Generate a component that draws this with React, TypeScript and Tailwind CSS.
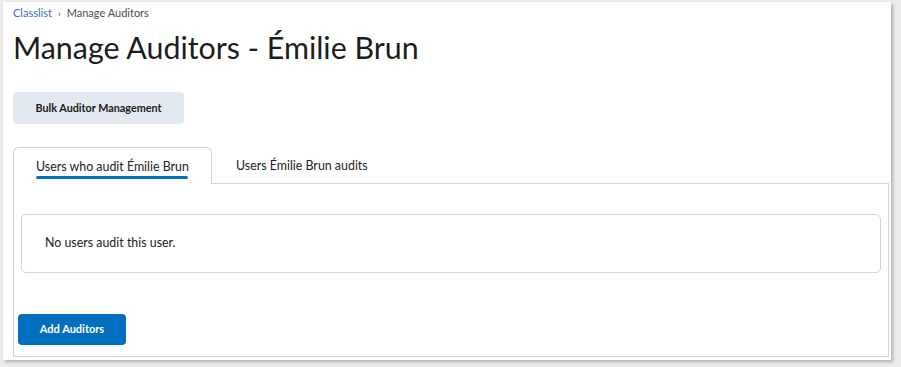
import React from 'react';

const App: React.FC = () => {
    return (
        <div className="w-[901px] h-[367px] bg-[#ececec] pt-[2px] pl-[3px] overflow-hidden" style={{ fontFamily: 'Lato, "Noto Sans", sans-serif' }}>
            <div className="w-[888px] h-[358px] bg-white shadow-[2px_2px_3px_rgba(0,0,0,0.25)] pl-[10px] pr-[2px] text-[#202122]">
                <nav className="flex items-center h-[21px] text-[11px] leading-none">
                    <span className="text-[#3a6db3]">Classlist</span>
                    <span className="mx-[6px] text-[#494c4e] text-[10px]">›</span>
                    <span className="text-[#494c4e]">Manage Auditors</span>
                </nav>
                <h1 className="mt-[6px] text-[30.4px] leading-[36px] text-[#1b1d1e]">Manage Auditors - Émilie Brun</h1>
                <button className="mt-[27px] h-[32px] w-[171px] rounded-[4px] bg-[#e3e9f1] text-[10.8px] font-bold text-[#202122]">
                    Bulk Auditor Management
                </button>
                <div className="mt-[23px] mr-[2px] w-[876px]">
                    <div className="flex h-[37px]">
                        <div className="relative w-[199px] rounded-t-[6px] border border-b-0 border-[#cdd5dc] bg-white px-[22px] pt-[10px] text-[12.4px] whitespace-nowrap">
                            <span>Users who audit Émilie Brun</span>
                            <div className="absolute left-[22px] right-[23px] bottom-[5px] h-[3px] rounded-full bg-[#006fbf]" />
                        </div>
                        <div className="flex-1 border-b border-[#cdd5dc] pl-[24px] pt-[10px] text-[12.4px] whitespace-nowrap">
                            Users Émilie Brun audits
                        </div>
                    </div>
                    <div className="h-[173px] border border-t-0 border-[#cdd5dc] px-[7px] pt-[30px]">
                        <div className="flex h-[59px] items-center rounded-[5px] border border-[#cdd5dc] pl-[23px] text-[12.4px]">
                            No users audit this user.
                        </div>
                        <button className="mt-[41px] -ml-[3px] h-[31px] w-[108px] rounded-[4px] bg-[#006fbf] text-[11px] font-bold text-white">
                            Add Auditors
                        </button>
                    </div>
                </div>
            </div>
        </div>
    );
};

export default App;
